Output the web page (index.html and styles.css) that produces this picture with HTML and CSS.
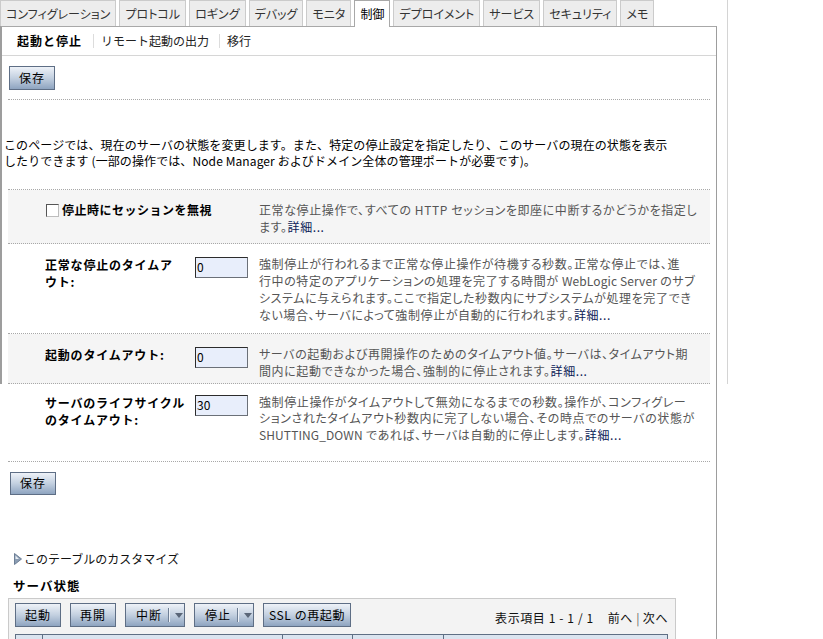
FILE: index.html
```html
<!DOCTYPE html>
<html lang="ja">
<head>
<meta charset="utf-8">
<title>サーバの起動と停止</title>
<link rel="stylesheet" href="styles.css">
</head>
<body>
<div class="frame-top">
  <nav class="tabs">
    <span class="tab">コンフィグレーション</span>
    <span class="tab">プロトコル</span>
    <span class="tab">ロギング</span>
    <span class="tab">デバッグ</span>
    <span class="tab">モニタ</span>
    <span class="tab active">制御</span>
    <span class="tab">デプロイメント</span>
    <span class="tab">サービス</span>
    <span class="tab">セキュリティ</span>
    <span class="tab">メモ</span>
  </nav>
  <div class="panel-upper">
    <div class="subtabs">
      <span class="subtab current">起動と停止</span>
      <span class="subtab">リモート起動の出力</span>
      <span class="subtab">移行</span>
    </div>
    <div class="actions"><button class="btn save">保存</button></div>
    <p class="intro">このページでは、現在のサーバの状態を変更します。また、特定の停止設定を指定したり、このサーバの現在の状態を表示<br>したりできます (一部の操作では、Node Manager およびドメイン全体の管理ポートが必要です)。</p>
    <div class="rows">
      <div class="row shade row-1">
        <label class="check-label"><span class="checkbox"></span>停止時にセッションを無視</label>
        <p class="desc">正常な停止操作で、すべての HTTP セッションを即座に中断するかどうかを指定し<br>ます。<a class="more">詳細...</a></p>
      </div>
      <div class="row row-2">
        <span class="label">正常な停止のタイムア<br>ウト:</span>
        <span class="field"><span class="input">0</span></span>
        <p class="desc">強制停止が行われるまで正常な停止操作が待機する秒数。正常な停止では、進<br>行中の特定のアプリケーションの処理を完了する時間が <span class="latin">WebLogic Server</span> のサブ<br>システムに与えられます。ここで指定した秒数内にサブシステムが処理を完了でき<br>ない場合、サーバによって強制停止が自動的に行われます。<a class="more">詳細...</a></p>
      </div>
      <div class="row shade row-3">
        <span class="label">起動のタイムアウト:</span>
        <span class="field"><span class="input">0</span></span>
        <p class="desc">サーバの起動および再開操作のためのタイムアウト値。サーバは、タイムアウト期<br>間内に起動できなかった場合、強制的に停止されます。<a class="more">詳細...</a></p>
      </div>
    </div>
  </div>
</div>
<div class="panel-lower">
  <div class="rows">
    <div class="row row-4">
      <span class="label">サーバのライフサイクル<br>のタイムアウト:</span>
      <span class="field"><span class="input">30</span></span>
      <p class="desc">強制停止操作がタイムアウトして無効になるまでの秒数。操作が、コンフィグレー<br>ションされたタイムアウト秒数内に完了しない場合、その時点でのサーバの状態が<br><span class="latin">SHUTTING_DOWN</span> であれば、サーバは自動的に停止します。<a class="more">詳細...</a></p>
    </div>
  </div>
  <div class="actions-lower"><button class="btn save">保存</button></div>
  <div class="customize">
    <svg class="tri" width="8" height="12" viewBox="0 0 8 12"><polygon points="0.5,0.5 7.5,6 0.5,11.5" fill="#8b9db3" stroke="#6d7f96" stroke-width="1"/><polygon points="1.5,2.5 5,6 1.5,6" fill="#e9eef4"/></svg>
    <span>このテーブルのカスタマイズ</span>
  </div>
  <h2 class="table-title">サーバ状態</h2>
  <div class="table-box">
    <div class="toolbar">
      <div class="tool-buttons">
        <button class="btn tbtn w46">起動</button>
        <button class="btn tbtn w46">再開</button>
        <button class="btn tbtn drop">中断<span class="sep"></span><span class="arrow"></span></button>
        <button class="btn tbtn drop">停止<span class="sep"></span><span class="arrow"></span></button>
        <button class="btn tbtn ssl">SSL の再起動</button>
      </div>
      <div class="paging">表示項目 1 - 1 / 1<span class="gap"></span>前へ <span class="bar">|</span> 次へ</div>
    </div>
    <div class="thead">
      <span class="th c1"></span><span class="th c2"></span><span class="th c3"></span><span class="th c4"></span><span class="th c5"></span>
    </div>
  </div>
</div>
</body>
</html>
```

FILE: styles.css
```css
html, body {
  margin: 0;
  padding: 0;
  background: #fff;
}
body {
  font-family: "Noto Sans CJK JP", "Noto Sans", sans-serif;
  font-size: 12px;
  line-height: 16.7px;
  color: #000;
  width: 823px;
  height: 639px;
  overflow: hidden;
}
p { margin: 0; }
button { font-family: inherit; }

.frame-top {
  width: 727px;
  border-right: 1px solid #d4d4d4;
}

/* tabs */
.tabs {
  display: flex;
  align-items: flex-end;
  height: 26px;
}
.tab {
  box-sizing: border-box;
  height: 26px;
  margin-right: 3px;
  padding: 0 5px;
  background: #ededed;
  border: 1px solid #cbcbcb;
  border-bottom: none;
  color: #333;
  line-height: 25px;
  font-feature-settings: "palt";
  white-space: nowrap;
}
.tab.active {
  height: 27px;
  margin-bottom: -1px;
  background: #fff;
  border-color: #a8a8a8;
  color: #000;
  position: relative;
  z-index: 1;
}

/* upper panel */
.panel-upper {
  box-sizing: border-box;
  width: 717px;
  border-top: 1px solid #a8a8a8;
  border-left: 2px solid #9d9d9d;
  border-right: 1px solid #9d9d9d;
}
.subtabs {
  display: flex;
  align-items: center;
  height: 28px;
  border-bottom: 1px solid #d6d6d6;
  padding-left: 15px;
}
.subtab {
  padding: 0 10px 0 7px;
  border-left: 1px solid #dcdcdc;
  line-height: 14px;
  color: #222;
}
.subtab.current {
  padding-left: 0;
  padding-right: 11px;
  border-left: none;
  font-weight: bold;
  color: #000;
  letter-spacing: 1px;
}

.actions {
  margin: 0 6px;
  padding: 10px 0 9px 1px;
  border-bottom: 1px dotted #a8a8a8;
}
.btn {
  box-sizing: border-box;
  height: 24px;
  border: 1px solid #5e6e85;
  background: linear-gradient(#eef2f8 0%, #c3d0e0 50%, #8ea4c0 100%);
  color: #000;
  font-size: 12px;
  padding: 0 10px;
  margin: 0;
  line-height: 20px;
  letter-spacing: 1px;
}
.save { width: 46px; padding: 0; }

.intro {
  margin: 37px 0 20px 2px;
  line-height: 16px;
  letter-spacing: 0.1px;
  white-space: nowrap;
}

/* rows */
.rows {
  margin: 0 6px;
  border-top: 1px dotted #a8a8a8;
}
.panel-lower .rows { border-top: none; margin: 0 6px 0 8px; }
.row {
  display: grid;
  grid-template-columns: 150px 64px 1fr;
  align-items: start;
  padding: 12px 0 10px 37px;
  border-bottom: 1px dotted #a8a8a8;
}
.row.shade { background: #f5f5f5; }
.row-1 { padding-bottom: 8px; }
.row-3 { padding-bottom: 3px; }
.row-4 { padding-top: 10px; padding-bottom: 17px; }

.label {
  font-weight: bold;
  letter-spacing: 0.8px;
  line-height: 17px;
  white-space: nowrap;
}
.check-label {
  grid-column: 1 / 3;
  display: flex;
  align-items: center;
  font-weight: bold;
  letter-spacing: 0.5px;
  padding-left: 1px;
}
.checkbox {
  box-sizing: border-box;
  width: 13px;
  height: 13px;
  margin-right: 3px;
  background: #fff;
  border: 1px solid;
  border-color: #555 #bdbdbd #bdbdbd #555;
}
.field { padding-top: 1px; }
.input {
  display: block;
  box-sizing: border-box;
  width: 53px;
  height: 21px;
  background: #e8eefb;
  border: 1px solid;
  border-color: #2c2c2c #6b7078 #6b7078 #2c2c2c;
  padding-left: 1px;
  line-height: 18px;
  font-size: 12px;
}
.desc {
  color: #555;
  letter-spacing: 0.6px;
  font-feature-settings: "palt";
  white-space: nowrap;
}
.latin { letter-spacing: 0.1px; }
.more { color: #0a1a55; }

/* lower */
.panel-lower {
  box-sizing: border-box;
  width: 717px;
  height: 256px;
  border-right: 1px solid #9d9d9d;
}
.actions-lower { padding: 10px 0 0 10px; }
.actions-lower .btn { height: 23px; }

.customize {
  display: flex;
  align-items: center;
  margin: 56px 0 0 14px;
  color: #111;
}
.tri { margin-right: 2px; }
.table-title {
  margin: 10px 0 0 13px;
  font-size: 12.5px;
  line-height: 17px;
  font-weight: bold;
  letter-spacing: 1px;
}
.table-box {
  box-sizing: border-box;
  width: 668px;
  margin: 4px 0 0 8px;
  border: 1px solid #cacaca;
  background: #f3f3f3;
  padding: 4px 7px 0 6px;
}
.toolbar {
  display: flex;
  justify-content: space-between;
  align-items: flex-end;
}
.tool-buttons { display: flex; gap: 9px; }
.tbtn { height: 24px; padding: 0; }
.w46 { width: 46px; }
.drop {
  width: 60px;
  display: flex;
  align-items: center;
  padding-left: 10px;
}
.sep {
  width: 1px;
  height: 14px;
  background: #eef2f8;
  border-left: 1px solid #6f7f95;
  margin: 0 5px 0 6px;
}
.arrow {
  width: 0;
  height: 0;
  border-left: 4px solid transparent;
  border-right: 4px solid transparent;
  border-top: 5px solid #5a6678;
}
.ssl { width: 88px; letter-spacing: 0.6px; }
.paging {
  letter-spacing: 0.6px;
  line-height: 16px;
  margin-bottom: 1px;
  color: #111;
}
.gap { display: inline-block; width: 14px; }
.bar { color: #666; letter-spacing: 0; }
.thead {
  display: flex;
  margin-top: 7px;
  height: 12px;
  border-top: 1px solid #5f6f84;
  border-left: 1px solid #5f6f84;
  border-right: 1px solid #5f6f84;
  background: #dbe4ef;
}
.th { border-right: 1px solid #5f6f84; }
.c1 { width: 26px; }
.c2 { width: 239px; }
.c3 { width: 69px; }
.c4 { width: 90px; }
.c5 { flex: 1; border-right: none; }
```
